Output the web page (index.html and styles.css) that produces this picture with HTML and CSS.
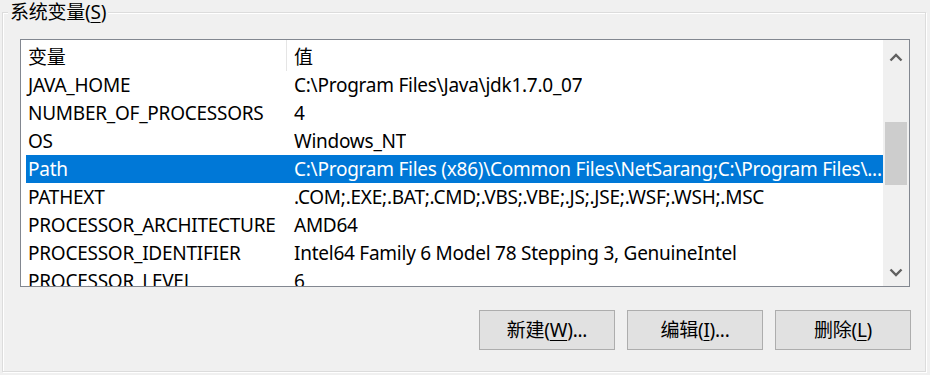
FILE: index.html
```html
<!DOCTYPE html>
<html lang="zh-CN">
<head>
<meta charset="utf-8">
<title>系统变量</title>
<link rel="stylesheet" href="styles.css">
</head>
<body>
<div class="group">
  <div class="group-title">系统变量(<u>S</u>)</div>
  <div class="list">
    <div class="list-content">
      <div class="header">
        <div class="hcell hname">变量</div>
        <div class="hcell hvalue">值</div>
      </div>
      <div class="rows">
        <div class="row"><div class="cname">JAVA_HOME</div><div class="cvalue">C:\Program Files\Java\jdk1.7.0_07</div></div>
        <div class="row"><div class="cname">NUMBER_OF_PROCESSORS</div><div class="cvalue">4</div></div>
        <div class="row"><div class="cname">OS</div><div class="cvalue">Windows_NT</div></div>
        <div class="row selected"><div class="cname">Path</div><div class="cvalue">C:\Program Files (x86)\Common Files\NetSarang;C:\Program Files\...</div></div>
        <div class="row"><div class="cname">PATHEXT</div><div class="cvalue">.COM;.EXE;.BAT;.CMD;.VBS;.VBE;.JS;.JSE;.WSF;.WSH;.MSC</div></div>
        <div class="row"><div class="cname">PROCESSOR_ARCHITECTURE</div><div class="cvalue">AMD64</div></div>
        <div class="row"><div class="cname">PROCESSOR_IDENTIFIER</div><div class="cvalue">Intel64 Family 6 Model 78 Stepping 3, GenuineIntel</div></div>
        <div class="row"><div class="cname">PROCESSOR_LEVEL</div><div class="cvalue">6</div></div>
      </div>
    </div>
    <div class="scrollbar">
      <div class="sb-btn sb-up">
        <svg width="14" height="9" viewBox="0 0 14 9"><path d="M1.5 7.5 L7 2 L12.5 7.5" fill="none" stroke="#606060" stroke-width="2.4"/></svg>
      </div>
      <div class="sb-track"><div class="sb-thumb"></div></div>
      <div class="sb-btn sb-down">
        <svg width="14" height="9" viewBox="0 0 14 9"><path d="M1.5 1.5 L7 7 L12.5 1.5" fill="none" stroke="#606060" stroke-width="2.4"/></svg>
      </div>
    </div>
  </div>
  <div class="buttons">
    <button class="btn">新建(<u>W</u>)...</button>
    <button class="btn">编辑(<u>I</u>)...</button>
    <button class="btn">删除(<u>L</u>)</button>
  </div>
</div>
</body>
</html>
```
FILE: styles.css
```css
html, body {
  margin: 0;
  padding: 0;
  background: #f0f0f0;
}
body {
  font-family: "Noto Sans", "Noto Sans CJK SC", sans-serif;
  font-size: 19px;
  letter-spacing: -0.25px;
  color: #000;
  width: 930px;
  height: 375px;
  overflow: hidden;
}
.group {
  position: relative;
  margin: 12px 0 0 2px;
  width: 905px;
  height: 332px;
  border: 1px solid #dcdcdc;
  box-shadow: inset 1px 1px 0 #fff, 1px 1px 0 #fff;
  padding: 26px 0 0 17px;
  box-sizing: content-box;
}
.group-title {
  position: absolute;
  left: 5px;
  top: -12px;
  padding: 0 2px;
  background: #f0f0f0;
  line-height: 22px;
  color: #000;
}
.group-title u, .btn u {
  text-decoration-thickness: 1px;
  text-underline-offset: 3px;
}
.list {
  display: flex;
  width: 888px;
  height: 246px;
  border: 1px solid #828790;
  background: #fff;
}
.list-content {
  flex: 1;
  overflow: hidden;
  display: flex;
  flex-direction: column;
}
.header {
  display: flex;
  height: 31px;
  flex-shrink: 0;
}
.hcell {
  display: flex;
  align-items: center;
  padding-left: 7px;
  height: 31px;
}
.hname {
  width: 258px;
  border-right: 1px solid #e5e5e5;
}
.rows {
  padding-left: 5px;
}
.row {
  display: flex;
  height: 28px;
  align-items: center;
  white-space: nowrap;
}
.row.selected {
  background: #0078d7;
  color: #fff;
}
.cname {
  width: 259px;
  padding-left: 2px;
  flex-shrink: 0;
  overflow: hidden;
}
.cvalue {
  padding-left: 7px;
  overflow: hidden;
  text-overflow: ellipsis;
}
.scrollbar {
  width: 26px;
  flex-shrink: 0;
  background: #f0f0f0;
  display: flex;
  flex-direction: column;
}
.sb-btn {
  height: 34px;
  display: flex;
  justify-content: center;
  flex-shrink: 0;
}
.sb-up {
  align-items: center;
  padding-top: 1px;
  box-sizing: border-box;
}
.sb-down {
  align-items: flex-end;
  padding-bottom: 9px;
  box-sizing: border-box;
}
.sb-track {
  flex: 1;
  padding: 0 2px;
}
.sb-thumb {
  margin-top: 48px;
  height: 63px;
  background: #cdcdcd;
}
.buttons {
  display: flex;
  justify-content: flex-end;
  gap: 12px;
  margin-top: 23px;
  width: 891px;
}
.btn {
  width: 136px;
  height: 40px;
  background: #e1e1e1;
  border: 1px solid #adadad;
  font-family: inherit;
  font-size: 19px;
  letter-spacing: -0.25px;
  color: #000;
  padding: 0;
  line-height: 1;
}
```
